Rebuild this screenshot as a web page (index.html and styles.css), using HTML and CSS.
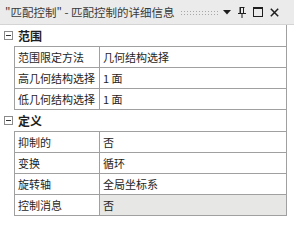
FILE: index.html
```html
<!DOCTYPE html>
<html lang="zh-CN">
<head>
<meta charset="utf-8">
<title>匹配控制</title>
<link rel="stylesheet" href="styles.css">
</head>
<body>
<div class="panel">
  <div class="titlebar">
    <span class="title">"匹配控制" - 匹配控制的详细信息</span>
    <span class="grip"></span>
    <span class="tb-icons">
      <svg class="ico" width="8" height="5" viewBox="0 0 8 5"><path d="M0 0H8L4 4.5Z" fill="#1e1e1e"/></svg>
      <svg class="ico" width="8" height="11" viewBox="0 0 8 11"><path d="M1.5 0.5H6.5M2.5 0.5V6M5.5 0.5V6M2 1V6" stroke="#1e1e1e" stroke-width="1" fill="none"/><path d="M0 6.5H8" stroke="#1e1e1e" stroke-width="1"/><path d="M4 7V11" stroke="#1e1e1e" stroke-width="1"/></svg>
      <svg class="ico" width="10" height="10" viewBox="0 0 10 10"><rect x="0.5" y="0.5" width="9" height="9" fill="none" stroke="#1e1e1e"/><path d="M0 1.5H10" stroke="#1e1e1e"/></svg>
      <svg class="ico" width="9" height="9" viewBox="0 0 9 9"><path d="M0.8 0.8L8.2 8.2M8.2 0.8L0.8 8.2" stroke="#1e1e1e" stroke-width="1.5"/></svg>
    </span>
  </div>
  <div class="grid">
    <div class="cat"><span class="toggle"></span><span class="cat-name">范围</span></div>
    <div class="props">
      <div class="row"><div class="name">范围限定方法</div><div class="val">几何结构选择</div></div>
      <div class="row"><div class="name">高几何结构选择</div><div class="val">1 面</div></div>
      <div class="row"><div class="name">低几何结构选择</div><div class="val">1 面</div></div>
    </div>
    <div class="cat"><span class="toggle"></span><span class="cat-name">定义</span></div>
    <div class="props">
      <div class="row"><div class="name">抑制的</div><div class="val">否</div></div>
      <div class="row"><div class="name">变换</div><div class="val">循环</div></div>
      <div class="row"><div class="name">旋转轴</div><div class="val">全局坐标系</div></div>
      <div class="row"><div class="name">控制消息</div><div class="val selected">否</div></div>
    </div>
  </div>
</div>
</body>
</html>
```

FILE: styles.css
```css
html, body {
  margin: 0;
  padding: 0;
  background: #ffffff;
}
body {
  font-family: "Noto Sans CJK SC", "Microsoft YaHei", sans-serif;
  font-size: 12px;
  color: #1e1e1e;
}
.panel {
  width: 294px;
  height: 247px;
  background: #ffffff;
  overflow: hidden;
}
.titlebar {
  height: 24px;
  background: #ebebeb;
  border-bottom: 1px solid #d4d4d4;
  display: flex;
  align-items: center;
  padding-left: 5px;
  padding-right: 15px;
  box-sizing: content-box;
}
.title {
  color: #3a3a3a;
  font-size: 11.5px;
  white-space: nowrap;
  line-height: 24px;
}
.grip {
  flex: 1;
  height: 6px;
  margin: 1px 5px 0 5px;
  background-image: radial-gradient(circle, #a8a8a8 0.6px, transparent 0.9px);
  background-size: 3px 3px;
}
.tb-icons {
  display: flex;
  align-items: center;
  gap: 7px;
}
.ico {
  display: block;
}
.grid {
  width: 286px;
  border-right: 1px solid #a0a0a0;
  font-size: 11px;
}
.cat {
  height: 21px;
  display: flex;
  align-items: center;
}
.toggle {
  width: 7px;
  height: 7px;
  border: 1px solid #8a8a8a;
  margin-left: 4px;
  margin-right: 5px;
  position: relative;
  background: #ffffff;
}
.toggle::after {
  content: "";
  position: absolute;
  left: 1px;
  right: 1px;
  top: 3px;
  height: 1px;
  background: #333333;
}
.cat-name {
  font-weight: bold;
  font-size: 12px;
}
.props {
  margin-left: 14px;
  border-top: 1px solid #a0a0a0;
  border-left: 1px solid #a0a0a0;
}
.row {
  display: flex;
  height: 20px;
  border-bottom: 1px solid #a0a0a0;
}
.name {
  width: 81px;
  padding-left: 3px;
  border-right: 1px solid #a0a0a0;
  line-height: 20px;
  white-space: nowrap;
  overflow: hidden;
}
.val {
  flex: 1;
  padding-left: 3px;
  line-height: 20px;
  white-space: nowrap;
}
.val.selected {
  background: #e7e7e5;
}
```
